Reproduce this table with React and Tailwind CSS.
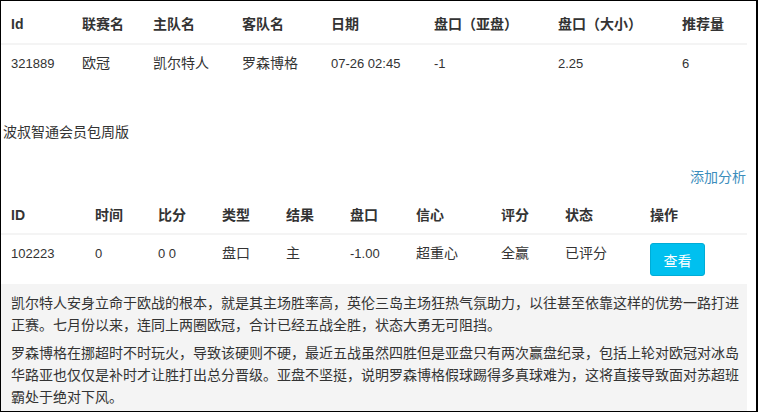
const matchCols = [
  { key: "id", label: "Id", w: "w-[73px] pl-[10px]" },
  { key: "league", label: "联赛名", w: "w-[71px] pl-2" },
  { key: "home", label: "主队名", w: "w-[89px] pl-2" },
  { key: "away", label: "客队名", w: "w-[89px] pl-2" },
  { key: "date", label: "日期", w: "w-[103px] pl-2" },
  { key: "asia", label: "盘口（亚盘）", w: "w-[124px] pl-2" },
  { key: "size", label: "盘口（大小）", w: "w-[124px] pl-2" },
  { key: "count", label: "推荐量", w: "flex-1 pl-2" },
];

const match = {
  id: "321889",
  league: "欧冠",
  home: "凯尔特人",
  away: "罗森博格",
  date: "07-26 02:45",
  asia: "-1",
  size: "2.25",
  count: "6",
};

const tipCols = [
  { key: "id", label: "ID", w: "w-[86px] pl-[10px]" },
  { key: "time", label: "时间", w: "w-[63px] pl-2" },
  { key: "score", label: "比分", w: "w-[64px] pl-2" },
  { key: "type", label: "类型", w: "w-[64px] pl-2" },
  { key: "result", label: "结果", w: "w-[64px] pl-2" },
  { key: "line", label: "盘口", w: "w-[66px] pl-2" },
  { key: "trust", label: "信心", w: "w-[85px] pl-2" },
  { key: "rate", label: "评分", w: "w-[64px] pl-2" },
  { key: "state", label: "状态", w: "w-[85px] pl-2" },
  { key: "op", label: "操作", w: "flex-1 pl-2" },
];

const tip = {
  id: "102223",
  time: "0",
  score: "0 0",
  type: "盘口",
  result: "主",
  line: "-1.00",
  trust: "超重心",
  rate: "全赢",
  state: "已评分",
};

const isNum = (v) => /^[-0-9.: ]+$/.test(v);

const App = () => {
  return (
    <div
      className="w-[758px] h-[412px] bg-white border-l border-t border-b border-r-2 border-black overflow-hidden text-[#333]"
      style={{ fontFamily: '"Liberation Sans", "Noto Sans CJK SC", sans-serif' }}
    >
      <div className="w-[746px]">
        {/* match table */}
        <div className="flex border-b-2 border-[#f4f4f4] pt-[13px] pb-[9px] text-[14px] leading-5 font-bold">
          {matchCols.map((c) => (
            <div key={c.key} className={c.w}>
              {c.label}
            </div>
          ))}
        </div>
        <div className="flex py-2 text-[14px] leading-5">
          {matchCols.map((c) => (
            <div key={c.key} className={c.w}>
              <span className={isNum(match[c.key]) ? "text-[13px]" : ""}>{match[c.key]}</span>
            </div>
          ))}
        </div>

        <p className="mt-[40px] pl-[2px] text-[14px] leading-5">波叔智通会员包周版</p>

        <div className="mt-[25px] flex justify-end pr-[1px]">
          <a className="text-[14px] leading-5 text-[#3c8dbc]" href="#">
            添加分析
          </a>
        </div>

        {/* tips table */}
        <div className="mt-[10px] flex border-b-2 border-[#f4f4f4] pt-2 pb-2 text-[14px] leading-5 font-bold">
          {tipCols.map((c) => (
            <div key={c.key} className={c.w}>
              {c.label}
            </div>
          ))}
        </div>
        <div className="flex items-start pt-2 pb-2 text-[14px] leading-5">
          {tipCols.map((c) =>
            c.key === "op" ? (
              <div key={c.key} className={c.w}>
                <button className="w-[55px] h-[33px] rounded-[3px] bg-[#00c0ef] border border-[#00acd6] text-white text-[14px] leading-5 pt-[3px]">
                  查看
                </button>
              </div>
            ) : (
              <div key={c.key} className={c.w}>
                <span className={isNum(tip[c.key]) ? "text-[13px]" : ""}>{tip[c.key]}</span>
              </div>
            )
          )}
        </div>

        {/* analysis */}
        <div className="bg-[#f4f4f4] pl-[10px] pr-[6px] pt-[8px] pb-[6px] text-[14px] leading-[22px]">
          <p>
            凯尔特人安身立命于欧战的根本，就是其主场胜率高，英伦三岛主场狂热气氛助力，以往甚至依靠这样的优势一路打进正赛。七月份以来，连同上两圈欧冠，合计已经五战全胜，状态大勇无可阻挡。
          </p>
          <p className="mt-[6px]">
            罗森博格在挪超时不时玩火，导致该硬则不硬，最近五战虽然四胜但是亚盘只有两次赢盘纪录，包括上轮对欧冠对冰岛华路亚也仅仅是补时才让胜打出总分晋级。亚盘不坚挺，说明罗森博格假球踢得多真球难为，这将直接导致面对苏超班霸处于绝对下风。
          </p>
        </div>
      </div>
    </div>
  );
};

export default App;
